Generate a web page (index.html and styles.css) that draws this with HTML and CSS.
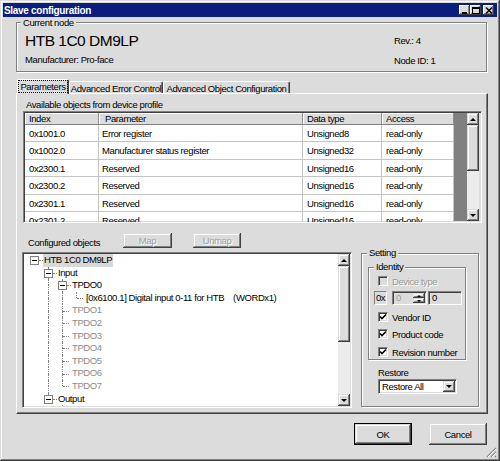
FILE: index.html
```html
<!DOCTYPE html>
<html lang="en">
<head>
    <meta charset="UTF-8">
    <title>Slave configuration</title>
    <link rel="stylesheet" href="styles.css">
</head>
<body>
<div class="window">
    <div class="titlebar">
        <span class="title">Slave configuration</span>
        <div class="caption-buttons">
            <span class="cap-btn"><svg width="8" height="7" viewBox="0 0 8 7"><rect x="1" y="5" width="5" height="2" fill="#000"/></svg></span>
            <span class="cap-btn"><svg width="8" height="7" viewBox="0 0 8 7"><rect x="0.5" y="0.5" width="7" height="6" fill="none" stroke="#000"/><rect x="0" y="0" width="8" height="2" fill="#000"/></svg></span>
            <span class="cap-btn close"><svg width="8" height="7" viewBox="0 0 8 7"><path d="M1 0.5 L7 6.5 M7 0.5 L1 6.5" stroke="#000" stroke-width="1.4"/></svg></span>
        </div>
    </div>

    <div class="client">
        <!-- current node -->
        <fieldset class="group node-group">
            <legend>Current node</legend>
            <div class="node-body">
                <div class="node-main">
                    <div class="node-name">HTB 1C0 DM9LP</div>
                    <div class="node-maker">Manufacturer: Pro-face</div>
                </div>
                <div class="node-info">
                    <div class="rev">Rev.: 4</div>
                    <div class="node-id">Node ID: 1</div>
                </div>
            </div>
        </fieldset>

        <div class="tabs">
            <div class="tab active"><span class="focus">Parameters</span></div>
            <div class="tab tab-error">Advanced Error Control</div>
            <div class="tab tab-object">Advanced Object Configuration</div>
        </div>

        <div class="tab-panel">
            <div class="caption">Available objects from device profile</div>

            <div class="grid-box sunken">
                <div class="grid">
                    <div class="grid-row head">
                        <div class="cell c-index">Index</div>
                        <div class="cell c-param">Parameter</div>
                        <div class="cell c-type">Data type</div>
                        <div class="cell c-access">Access</div>
                    </div>
                    <div class="grid-row">
                        <div class="cell c-index">0x1001.0</div>
                        <div class="cell c-param">Error register</div>
                        <div class="cell c-type">Unsigned8</div>
                        <div class="cell c-access">read-only</div>
                    </div>
                    <div class="grid-row">
                        <div class="cell c-index">0x1002.0</div>
                        <div class="cell c-param">Manufacturer status register</div>
                        <div class="cell c-type">Unsigned32</div>
                        <div class="cell c-access">read-only</div>
                    </div>
                    <div class="grid-row">
                        <div class="cell c-index">0x2300.1</div>
                        <div class="cell c-param">Reserved</div>
                        <div class="cell c-type">Unsigned16</div>
                        <div class="cell c-access">read-only</div>
                    </div>
                    <div class="grid-row">
                        <div class="cell c-index">0x2300.2</div>
                        <div class="cell c-param">Reserved</div>
                        <div class="cell c-type">Unsigned16</div>
                        <div class="cell c-access">read-only</div>
                    </div>
                    <div class="grid-row">
                        <div class="cell c-index">0x2301.1</div>
                        <div class="cell c-param">Reserved</div>
                        <div class="cell c-type">Unsigned16</div>
                        <div class="cell c-access">read-only</div>
                    </div>
                    <div class="grid-row">
                        <div class="cell c-index">0x2301.2</div>
                        <div class="cell c-param">Reserved</div>
                        <div class="cell c-type">Unsigned16</div>
                        <div class="cell c-access">read-only</div>
                    </div>
                </div>
                <div class="grid-empty"></div>
                <div class="vscroll">
                    <div class="sb-btn up"></div>
                    <div class="sb-thumb grid-thumb"></div>
                    <div class="sb-track"></div>
                    <div class="sb-btn down"></div>
                </div>
            </div>

            <div class="map-row">
                <span class="map-label">Configured objects</span>
                <button class="btn btn-map" disabled>Map</button>
                <button class="btn btn-unmap" disabled>Unmap</button>
            </div>

            <div class="lower">
                <div class="tree sunken">
                    <div class="tree-items">
                        <div class="node"><span class="ind"><i class="pm"></i></span><span class="label selected">HTB 1C0 DM9LP</span></div>
                        <div class="node"><span class="ind"></span><span class="ind up down"><i class="pm"></i></span><span class="label">Input</span></div>
                        <div class="node"><span class="ind"></span><span class="ind up down"></span><span class="ind up down"><i class="pm"></i></span><span class="label">TPDO0</span></div>
                        <div class="node"><span class="ind"></span><span class="ind up down"></span><span class="ind up down"></span><span class="ind up"><i class="h"></i></span><span class="label">[0x6100.1] Digital input 0-11 for HTB    (WORDx1)</span></div>
                        <div class="node off"><span class="ind"></span><span class="ind up down"></span><span class="ind up down"><i class="h"></i></span><span class="label">TPDO1</span></div>
                        <div class="node off"><span class="ind"></span><span class="ind up down"></span><span class="ind up down"><i class="h"></i></span><span class="label">TPDO2</span></div>
                        <div class="node off"><span class="ind"></span><span class="ind up down"></span><span class="ind up down"><i class="h"></i></span><span class="label">TPDO3</span></div>
                        <div class="node off"><span class="ind"></span><span class="ind up down"></span><span class="ind up down"><i class="h"></i></span><span class="label">TPDO4</span></div>
                        <div class="node off"><span class="ind"></span><span class="ind up down"></span><span class="ind up down"><i class="h"></i></span><span class="label">TPDO5</span></div>
                        <div class="node off"><span class="ind"></span><span class="ind up down"></span><span class="ind up down"><i class="h"></i></span><span class="label">TPDO6</span></div>
                        <div class="node off"><span class="ind"></span><span class="ind up down"></span><span class="ind up"><i class="h"></i></span><span class="label">TPDO7</span></div>
                        <div class="node"><span class="ind"></span><span class="ind up"><i class="pm"></i></span><span class="label">Output</span></div>
                        <div class="node off"><span class="ind"></span><span class="ind"></span><span class="ind up down"><i class="h"></i></span><span class="label">RPDO0</span></div>
                    </div>
                    <div class="vscroll">
                        <div class="sb-btn up"></div>
                        <div class="sb-thumb tree-thumb"></div>
                        <div class="sb-track"></div>
                        <div class="sb-btn down"></div>
                    </div>
                </div>

                <fieldset class="group setting">
                    <legend>Setting</legend>
                    <fieldset class="group identity">
                        <legend>Identity</legend>
                        <div class="check disabled row-device"><span class="box"></span>Device type</div>
                        <div class="id-row">
                            <span class="hex">0x</span>
                            <span class="spin sunken">
                                <span class="spin-text">0</span>
                                <span class="spin-btns"><span class="spin-btn up"></span><span class="spin-btn down"></span></span>
                            </span>
                            <span class="edit sunken">0</span>
                        </div>
                        <div class="check row-vendor"><span class="box"><svg width="8" height="8" viewBox="0 0 8 8"><path d="M1 3.5 L3 5.5 L7 1.5" fill="none" stroke="#000" stroke-width="1.6"/></svg></span>Vendor ID</div>
                        <div class="check row-product"><span class="box"><svg width="8" height="8" viewBox="0 0 8 8"><path d="M1 3.5 L3 5.5 L7 1.5" fill="none" stroke="#000" stroke-width="1.6"/></svg></span>Product code</div>
                        <div class="check row-revision"><span class="box"><svg width="8" height="8" viewBox="0 0 8 8"><path d="M1 3.5 L3 5.5 L7 1.5" fill="none" stroke="#000" stroke-width="1.6"/></svg></span>Revision number</div>
                    </fieldset>
                    <div class="restore-label">Restore</div>
                    <div class="combo sunken">
                        <span class="combo-text">Restore All</span>
                        <span class="combo-drop"></span>
                    </div>
                </fieldset>
            </div>
        </div>

        <div class="dialog-buttons">
            <button class="btn btn-ok">OK</button>
            <button class="btn btn-cancel">Cancel</button>
        </div>
    </div>

    <svg class="grip" width="11" height="11" viewBox="0 0 11 11">
        <path d="M10 1 L1 10 M10 5 L5 10 M10 9 L9 10" stroke="#808080" stroke-width="1.2"/>
        <path d="M10 2 L2 10 M10 6 L6 10" stroke="#fff" stroke-width="1"/>
    </svg>
</div>
</body>
</html>
```

FILE: styles.css
```css
* {
    margin: 0;
    padding: 0;
    box-sizing: border-box;
}

html, body {
    width: 500px;
    height: 461px;
    overflow: hidden;
}

body {
    font-family: "Liberation Sans", Arial, sans-serif;
    font-size: 9.5px;
    letter-spacing: -0.4px;
    line-height: 11px;
    color: #000;
    background: #dcdcdc;
}

.window {
    position: relative;
    width: 500px;
    height: 461px;
    padding: 3px;
    background: #dcdcdc;
    box-shadow: inset -1px -1px #404040, inset 1px 1px #dcdcdc, inset -2px -2px #808080, inset 2px 2px #fff;
    display: flex;
    flex-direction: column;
}

/* title bar */
.titlebar {
    height: 14px;
    display: flex;
    align-items: center;
    padding: 0 3px 0 1px;
    background: #0a1f7d;
}

.title {
    color: #fff;
    font-weight: bold;
    font-size: 10px;
    letter-spacing: -0.3px;
}

.caption-buttons {
    margin-left: auto;
    display: flex;
}

.cap-btn {
    width: 11px;
    height: 10px;
    display: flex;
    align-items: center;
    justify-content: center;
    background: #dcdcdc;
    box-shadow: inset -1px -1px #404040, inset 1px 1px #fff, inset -2px -2px #808080;
}

.cap-btn.close {
    margin-left: 2px;
}

.client {
    flex: 1;
    padding: 0 10px 0 13px;
}

/* group boxes */
.group {
    border: 1px solid #808080;
    box-shadow: 1px 1px 0 #fff, inset 1px 1px 0 #fff;
}

.group legend {
    margin-left: 4px;
    padding: 0 2px;
    line-height: 11px;
    background: #dcdcdc;
}

.node-group {
    height: 55px;
}

.node-body {
    display: flex;
    padding: 4px 0 0 8px;
}

.node-main {
    flex: 1;
}

.node-name {
    font-size: 15.5px;
    letter-spacing: -0.5px;
    line-height: 18px;
}

.node-maker {
    margin-top: 3.5px;
}

.node-info {
    width: 92px;
    padding-top: 2.5px;
}

.node-id {
    margin-top: 9px;
}

/* tabs */
.tabs {
    margin-top: 7px;
    height: 14px;
    padding-left: 1px;
    display: flex;
    align-items: flex-end;
}

.tab {
    height: 12px;
    padding-top: 1px;
    text-align: center;
    border-top: 1px solid #fff;
    border-left: 1px solid #fff;
    border-right: 1px solid #404040;
    border-radius: 2px 2px 0 0;
    box-shadow: inset -1px 0 #808080;
    white-space: nowrap;
}

.tab.active {
    position: relative;
    z-index: 1;
    width: 52px;
    height: 15px;
    margin-bottom: -1px;
    background: #dcdcdc;
}

.tab-error {
    width: 94px;
}

.tab-object {
    width: 127px;
}

.focus {
    outline: 1px dotted #000;
    outline-offset: 0;
    padding: 0 1px;
}

.tab-panel {
    width: 472px;
    height: 321px;
    padding: 5px 5px 0 6px;
    border-top: 1px solid #fff;
    border-left: 1px solid #fff;
    border-right: 1px solid #404040;
    border-bottom: 1px solid #404040;
    box-shadow: inset -1px -1px #808080;
}

.caption {
    margin-left: 3px;
}

/* sunken frames */
.sunken {
    border: 1px solid;
    border-color: #808080 #fff #fff #808080;
    box-shadow: inset 1px 1px #404040, inset -1px -1px #dcdcdc;
    padding: 1px;
}

/* object grid */
.grid-box {
    margin-top: 1px;
    height: 112px;
    display: flex;
    overflow: hidden;
}

.grid {
    width: 429px;
    background: #fff;
}

.grid-row {
    display: flex;
    height: 17.4px;
    border-bottom: 1px solid #c4c4c4;
}

.grid-row.head {
    height: 12px;
    background: #dcdcdc;
    border-bottom: 1px solid #808080;
}

.cell {
    padding: 3px 0 0 4px;
    border-right: 1px solid #c4c4c4;
    white-space: nowrap;
    overflow: hidden;
}

.head .cell {
    padding-top: 0;
    border-right: 1px solid #909090;
    box-shadow: inset 1px 1px #fff;
}

.c-index {
    width: 74px;
}

.c-param {
    width: 204px;
    padding-left: 3px;
}

.head .c-param {
    padding-left: 6px;
}

.c-type {
    width: 79px;
}

.c-access {
    width: 72px;
}

.grid-empty {
    width: 13px;
    background: #808080;
}

/* scroll bars */
.vscroll {
    width: 12px;
    display: flex;
    flex-direction: column;
}

.sb-btn,
.sb-thumb,
.spin-btn,
.combo-drop,
.btn {
    background: #dcdcdc;
    box-shadow: inset -1px -1px #404040, inset 1px 1px #dcdcdc, inset -2px -2px #808080, inset 2px 2px #fff;
}

.sb-btn {
    height: 12px;
    display: flex;
    align-items: center;
    justify-content: center;
}

.sb-btn.up::before,
.spin-btn.up::before {
    content: "";
    border-left: 3px solid transparent;
    border-right: 3px solid transparent;
    border-bottom: 3px solid #000;
}

.sb-btn.down::before,
.spin-btn.down::before,
.combo-drop::before {
    content: "";
    border-left: 3px solid transparent;
    border-right: 3px solid transparent;
    border-top: 3px solid #000;
}

.sb-track {
    flex: 1;
    background: #ececec;
}

.grid-thumb {
    height: 46px;
}

.tree-thumb {
    height: 76px;
}

/* map buttons */
.map-row {
    margin-top: 10px;
    height: 15px;
    display: flex;
    align-items: flex-end;
}

.map-label {
    width: 95px;
    margin-left: 5px;
}

.btn {
    border: none;
    font: inherit;
    letter-spacing: inherit;
    color: #000;
}

.btn:disabled {
    color: #a0a0a0;
    text-shadow: 1px 1px #fff;
}

.btn-map {
    width: 49px;
    height: 15px;
}

.btn-unmap {
    width: 48px;
    height: 15px;
    margin-left: 21px;
}

/* tree + setting */
.lower {
    display: flex;
    align-items: flex-start;
}

.tree {
    width: 330px;
    height: 156px;
    margin: 4px 0 0 -1px;
    background: #fff;
    display: flex;
    overflow: hidden;
}

.tree-items {
    flex: 1;
    padding-left: 3px;
    overflow: hidden;
}

.node {
    height: 12.6px;
    line-height: 12.6px;
    display: flex;
    white-space: pre;
}

.node.off {
    color: #8c8c8c;
}

.ind {
    position: relative;
    width: 14px;
    flex: none;
}

.ind.up::before {
    content: "";
    position: absolute;
    left: 7px;
    top: 0;
    height: 50%;
    border-left: 1px dotted #808080;
}

.ind.down::after {
    content: "";
    position: absolute;
    left: 7px;
    top: 50%;
    bottom: 0;
    border-left: 1px dotted #808080;
}

.ind .h {
    position: absolute;
    left: 8px;
    right: 0;
    top: 50%;
    border-top: 1px dotted #808080;
}

.ind .pm {
    position: absolute;
    z-index: 1;
    left: 3px;
    top: calc(50% - 4px);
    width: 9px;
    height: 9px;
    border: 1px solid #808080;
    background: #fff;
}

.ind .pm::before {
    content: "";
    position: absolute;
    left: 1px;
    top: 3px;
    width: 5px;
    height: 1px;
    background: #000;
}

.ind .pm::after {
    content: "";
    position: absolute;
    left: 8px;
    top: 3px;
    width: 4px;
    border-top: 1px dotted #808080;
}

.label {
    margin-left: 2px;
    padding: 0 1px;
}

.label.selected {
    background: #d8d8d8;
}

.setting {
    width: 118px;
    height: 159px;
    margin-left: 9px;
}

.setting > legend,
.identity > legend {
    margin-left: 5px;
    line-height: 10px;
}

.identity {
    width: 98px;
    height: 98px;
    margin: 4px 0 0 6px;
}

.check {
    height: 13px;
    padding-left: 9px;
    display: flex;
    align-items: center;
}

.check .box {
    width: 10px;
    height: 10px;
    margin-right: 4px;
    display: flex;
    align-items: center;
    justify-content: center;
    background: #fff;
    border: 1px solid;
    border-color: #808080 #fff #fff #808080;
    box-shadow: inset 1px 1px #404040, inset -1px -1px #dcdcdc;
}

.check.disabled {
    color: #9a9a9a;
    text-shadow: 1px 1px #fff;
}

.check.disabled .box {
    background: #dcdcdc;
}

.row-device {
    margin-top: 2.5px;
}

.id-row {
    margin-top: 3.5px;
    height: 14px;
    padding-left: 5px;
    display: flex;
}

.hex {
    width: 13px;
    text-align: center;
    line-height: 12px;
    border: 1px solid;
    border-color: #808080 #fff #fff #808080;
}

.spin {
    width: 35px;
    margin-left: 5px;
    display: flex;
    padding: 1px;
}

.spin-text {
    flex: 1;
    padding-left: 2px;
    color: #9a9a9a;
    line-height: 10px;
}

.spin-btns {
    width: 12px;
    display: flex;
    flex-direction: column;
}

.spin-btn {
    flex: 1;
    display: flex;
    align-items: center;
    justify-content: center;
}

.spin-btn.up::before,
.spin-btn.down::before {
    border-left-width: 2px;
    border-right-width: 2px;
    border-bottom-width: 2px;
    border-top-width: 2px;
}

.spin-btn.up::before {
    border-top: 0;
}

.spin-btn.down::before {
    border-bottom: 0;
}

.edit {
    width: 34px;
    margin-left: 1px;
    padding-left: 3px;
    line-height: 10px;
}

.row-vendor {
    margin-top: 5.5px;
}

.row-product {
    margin-top: 4px;
}

.row-revision {
    margin-top: 5px;
}

.restore-label {
    margin: 6.5px 0 0 16px;
}

.combo {
    width: 79px;
    height: 15px;
    margin: 1.5px 0 0 16px;
    display: flex;
    background: #fff;
    padding: 1px;
}

.combo-text {
    flex: 1;
    padding-left: 2px;
    line-height: 11px;
}

.combo-drop {
    width: 12px;
    display: flex;
    align-items: center;
    justify-content: center;
}

/* OK / Cancel */
.dialog-buttons {
    margin-top: 9px;
    display: flex;
    justify-content: flex-end;
    gap: 17px;
}

.btn-ok,
.btn-cancel {
    width: 58px;
    height: 22px;
}

.btn-ok {
    border: 1px solid #000;
}

.grip {
    position: absolute;
    right: 3px;
    bottom: 3px;
}
```
